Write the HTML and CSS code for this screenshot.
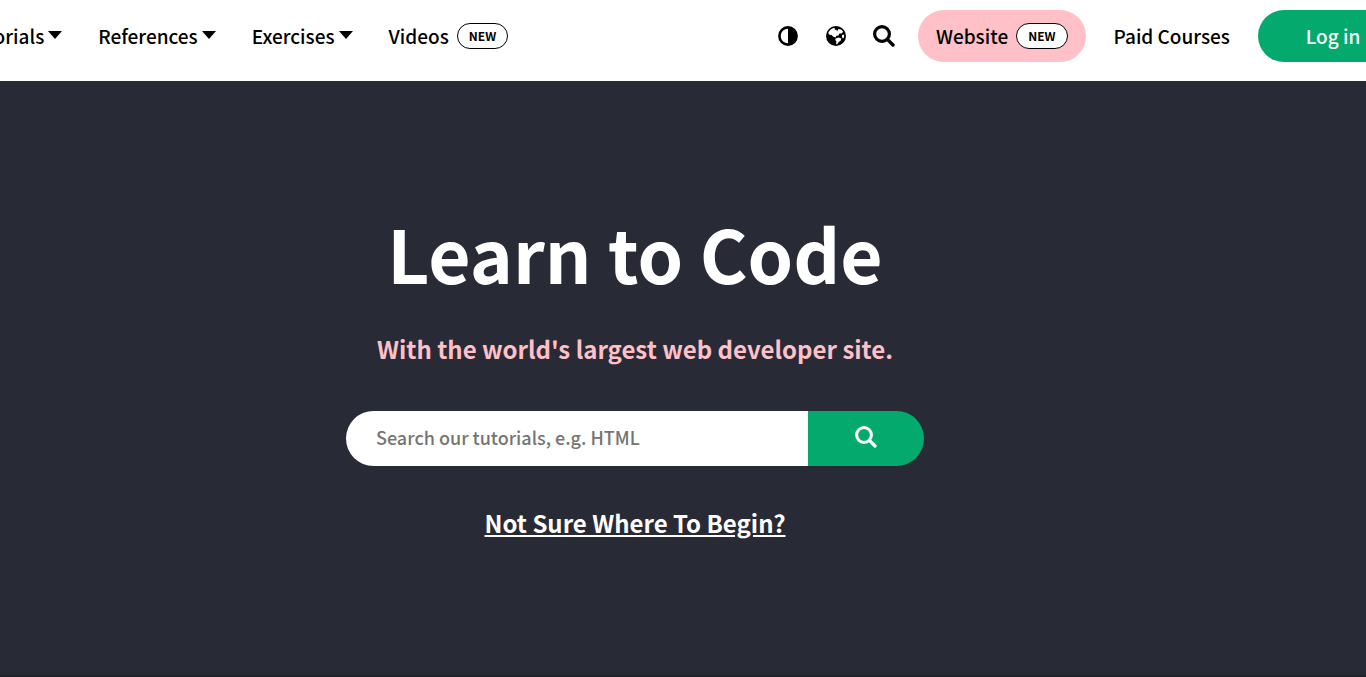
FILE: index.html
```
<!DOCTYPE html>
<html lang="en">
<head>
  <meta charset="UTF-8" />
  <meta name="viewport" content="width=device-width, initial-scale=1.0" />
  <title>Learn to Code</title>
  <link rel="stylesheet" href="styles.css">
</head>
<body>
  <div class="page">
    <header class="topnav">
      <nav class="nav-group nav-left">
        <a href="#" class="nav-link">Tutorials <span class="caret"></span></a>
        <a href="#" class="nav-link">References <span class="caret"></span></a>
        <a href="#" class="nav-link">Exercises <span class="caret"></span></a>
        <a href="#" class="nav-link">Videos <span class="badge">NEW</span></a>
      </nav>

      <div class="nav-group nav-right">
        <button type="button" class="icon-button" aria-label="Toggle dark mode">
          <svg width="20" height="20" viewBox="0 0 20 20">
            <circle cx="10" cy="10" r="8.6" fill="none" stroke="#000" stroke-width="2.6"/>
            <path d="M10 1a9 9 0 0 1 0 18z"/>
          </svg>
        </button>
        <button type="button" class="icon-button" aria-label="Translate">
          <svg width="20" height="20" viewBox="0 0 20 20">
            <circle cx="10" cy="10" r="10"/>
            <path fill="#fff" d="M2.4 6.2L4.6 3.4L7.4 2L9.2 2.6L8.6 4.2L10.4 3.6L11 5.4L12.6 3L15.2 3.4L17.2 5.8L15.6 7.4L13.4 7.6L12.4 9.4L10.4 9.8L9.6 11.6L7.4 10.8L5.2 8.8L4 9L2.6 8z"/>
            <path fill="#fff" d="M9.8 12.4L12.6 11.6L15.4 12.6L14.6 14.8L12.6 16L11.4 18L10 18.2L10.4 15.4L9.2 14z"/>
            <path fill="#fff" d="M16.2 9L18 8.6L18.2 11L17 12.6L15.8 11z"/>
          </svg>
        </button>
        <button type="button" class="icon-button" aria-label="Search">
          <svg width="22" height="22" viewBox="0 0 22 22">
            <circle cx="9" cy="9" r="7.4" fill="none" stroke="#000" stroke-width="3.2"/>
            <path d="M14.4 14.4l5.6 5.6" stroke="#000" stroke-width="3.4" stroke-linecap="round"/>
          </svg>
        </button>
        <a href="#" class="nav-link website">Website <span class="badge">NEW</span></a>
        <a href="#" class="nav-link courses">Paid Courses</a>
        <a href="#" class="login">Log in</a>
      </div>
    </header>

    <main class="hero">
      <h1>Learn to Code</h1>
      <h3>With the world's largest web developer site.</h3>
      <form class="search">
        <input type="text" placeholder="Search our tutorials, e.g. HTML" aria-label="Search our tutorials">
        <button type="submit" aria-label="Search">
          <svg width="22" height="22" viewBox="0 0 22 22">
            <circle cx="9" cy="9" r="7.4" fill="none" stroke="#fff" stroke-width="3"/>
            <path d="M14.4 14.4l5.6 5.6" stroke="#fff" stroke-width="3.2" stroke-linecap="round"/>
          </svg>
        </button>
      </form>
      <a href="#" class="begin">Not Sure Where To Begin?</a>
    </main>
  </div>
</body>
</html>
```
FILE: styles.css
```
* {
  margin: 0;
  padding: 0;
  box-sizing: border-box;
  font-family: "Noto Sans CJK SC", "Open Sans", sans-serif;
}

body {
  background-color: #282a35;
  color: #000;
  overflow: hidden;
}

.page {
  display: flex;
  flex-direction: column;
  min-height: 100vh;
  margin-left: -96px;
}

.topnav {
  display: flex;
  justify-content: space-between;
  align-items: flex-start;
  margin-right: -42px;
  padding-top: 10px;
  height: 81px;
  background-color: #fff;
}

.nav-group {
  display: flex;
  align-items: center;
  height: 52px;
}

.nav-left {
  gap: 36px;
  padding-left: 60px;
}

.nav-link {
  display: flex;
  align-items: center;
  font-size: 19px;
  font-weight: 500;
  line-height: 28px;
  color: #000;
  text-decoration: none;
  white-space: nowrap;
}

.caret {
  margin: 0 0 2px 4px;
  border-top: 8px solid #000;
  border-left: 7px solid transparent;
  border-right: 7px solid transparent;
}

.badge {
  margin-left: 8px;
  padding: 0 11px;
  border: 1px solid #000;
  border-radius: 13px;
  background-color: #fff;
  font-size: 12px;
  font-weight: 700;
  line-height: 24px;
}

.icon-button {
  display: flex;
  align-items: center;
  justify-content: center;
  width: 48px;
  height: 48px;
  border: none;
  background: none;
  cursor: pointer;
}

.website {
  height: 52px;
  margin-left: 10px;
  padding: 0 18px;
  border-radius: 26px;
  background-color: #ffc0c7;
}

.courses {
  margin: 0 28px;
}

.login {
  width: 150px;
  border-radius: 26px;
  background-color: #04aa6d;
  color: #fff;
  font-size: 19px;
  font-weight: 500;
  line-height: 52px;
  text-align: center;
  text-decoration: none;
}

.hero {
  flex: 1;
  display: flex;
  flex-direction: column;
  align-items: center;
  padding: 120px 16px 0;
  border-bottom: 2px solid #20222c;
  color: #fff;
}

h1 {
  font-size: 73px;
  font-weight: 700;
  line-height: 102px;
}

h3 {
  margin-top: 26px;
  font-size: 24px;
  font-weight: 700;
  line-height: 40px;
  color: #ffc0c7;
}

.search {
  display: flex;
  width: 100%;
  max-width: 578px;
  height: 55px;
  margin-top: 42px;
}

.search input {
  flex: 1;
  min-width: 0;
  padding: 0 30px 4px;
  border: none;
  border-radius: 28px 0 0 28px;
  font-size: 18px;
  font-weight: 500;
  outline: none;
}

.search input::placeholder {
  color: #757575;
}

.search button {
  display: flex;
  align-items: center;
  justify-content: center;
  width: 116px;
  padding-bottom: 4px;
  border: none;
  border-radius: 0 28px 28px 0;
  background-color: #04aa6d;
  cursor: pointer;
}

.begin {
  margin-top: 37px;
  font-size: 24px;
  font-weight: 700;
  line-height: 40px;
  color: #fff;
}
```
